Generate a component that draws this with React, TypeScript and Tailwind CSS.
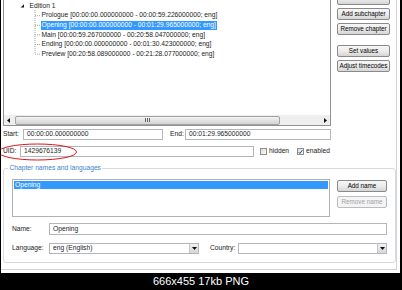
import React from 'react';

const chapters = [
  { name: 'Prologue [00:00:00.000000000 - 00:00:59.226000000; eng]', selected: false },
  { name: 'Opening [00:00:00.000000000 - 00:01:29.965000000; eng]', selected: true },
  { name: 'Main [00:00:59.267000000 - 00:20:58.047000000; eng]', selected: false },
  { name: 'Ending [00:00:00.000000000 - 00:01:30.423000000; eng]', selected: false },
  { name: 'Preview [00:20:58.089000000 - 00:21:28.077000000; eng]', selected: false },
];

const btn =
  'h-[12px] w-full flex items-center justify-center rounded-[2px] border border-[#8a8a8a] bg-linear-to-b from-[#f6f6f6] via-[#ececec] to-[#d5d5d5] text-black text-[6.3px] whitespace-nowrap';

const Button: React.FC<{ label: string; className?: string; disabled?: boolean }> = ({ label, className = '', disabled }) => (
  <div
    className={
      disabled
        ? `h-[12px] w-full flex items-center justify-center rounded-[2px] border border-[#b8bcbf] bg-[#f4f4f4] text-[#a3a3a3] text-[6.3px] whitespace-nowrap ${className}`
        : `${btn} ${className}`
    }
  >
    {label}
  </div>
);

const Input: React.FC<{ value?: string; className?: string }> = ({ value = '', className = '' }) => (
  <div className={`h-[11px] border border-[#b3b6bb] bg-white flex items-center pl-[3px] whitespace-nowrap overflow-hidden ${className}`}>
    {value}
  </div>
);

const Combo: React.FC<{ value?: string; className?: string }> = ({ value = '', className = '' }) => (
  <div className={`h-[11px] border border-[#b3b6bb] bg-white flex items-center ${className}`}>
    <span className="flex-1 pl-[3px] whitespace-nowrap">{value}</span>
    <div className="w-[9px] h-full border-l border-[#c4c4c4] bg-linear-to-b from-[#f2f2f2] to-[#d6d6d6] flex items-center justify-center">
      <svg width="5" height="3" viewBox="0 0 5 3">
        <polygon points="0,0 5,0 2.5,3" fill="#111" />
      </svg>
    </div>
  </div>
);

const Check: React.FC<{ checked?: boolean }> = ({ checked }) => (
  <div className="w-[7px] h-[7px] border border-[#8f8f8f] bg-linear-to-br from-[#dcdcdc] to-[#fafafa] flex items-center justify-center">
    {checked && (
      <svg width="6" height="6" viewBox="0 0 6 6">
        <path d="M0.8 3.2 L2.3 4.8 L5.3 0.8" stroke="#21489a" strokeWidth="1.2" fill="none" />
      </svg>
    )}
  </div>
);

export default function App() {
  return (
    <div className="w-[402px] h-[290px] bg-black flex flex-col font-['Liberation_Sans',Arial,sans-serif]">
      <div className="h-[273px] ml-px mr-[2px] bg-white relative text-[6.7px] leading-none text-[#1a1a1a]">
        <div className="w-[396px] h-[270px] border-r border-b border-[#d4d4d4] flex flex-col">
          {/* tree + chapter buttons */}
          <div className="flex h-[126px]">
            <div className="ml-[2px] w-[328px] h-[126px] border-l border-r border-b border-[#8e9297] flex flex-col">
              <div className="relative flex-1 flex flex-col pt-[1.3px]">
                <svg className="absolute left-0 top-0" width="326" height="60">
                  <polygon points="20,4.2 20,7.6 16.6,7.6" fill="#1a1a1a" />
                  <line x1="31" y1="10" x2="31" y2="54" stroke="#a5a5a5" strokeWidth="1" strokeDasharray="1 1" />
                  {[15.7, 25.3, 34.9, 44.5, 54.1].map((y) => (
                    <line key={y} x1="31" y1={y} x2="36" y2={y} stroke="#a5a5a5" strokeWidth="1" strokeDasharray="1 1" />
                  ))}
                </svg>
                <div className="h-[9.6px] flex items-center pl-[25.5px]">Edition 1</div>
                {chapters.map((c) => (
                  <div key={c.name} className="h-[9.6px] flex items-center pl-[36.5px]">
                    <span
                      className={`px-[1px] h-[8.6px] flex items-center whitespace-nowrap ${
                        c.selected ? 'bg-[#3399ff] text-white' : ''
                      }`}
                    >
                      {c.name}
                    </span>
                  </div>
                ))}
              </div>
              {/* horizontal scrollbar */}
              <div className="h-[10px] bg-[#eeeeee] flex items-center">
                <div className="w-[9px] h-full flex items-center justify-center">
                  <svg width="3" height="5" viewBox="0 0 3 5">
                    <polygon points="3,0 3,5 0,2.5" fill="#111" />
                  </svg>
                </div>
                <div className="ml-[2px] w-[265px] h-[9px] rounded-[2px] border border-[#a2a2a2] bg-linear-to-b from-[#f3f3f3] to-[#d3d3d3] flex items-center justify-center gap-[1px]">
                  <div className="w-px h-[4px] bg-[#666]" />
                  <div className="w-px h-[4px] bg-[#666]" />
                  <div className="w-px h-[4px] bg-[#666]" />
                </div>
                <div className="flex-1" />
                <div className="w-[9px] h-full flex items-center justify-center">
                  <svg width="3" height="5" viewBox="0 0 3 5">
                    <polygon points="0,0 0,5 3,2.5" fill="#111" />
                  </svg>
                </div>
              </div>
            </div>
            <div className="ml-[6px] w-[53px] flex flex-col">
              <Button label="" className="-mt-[7px]" />
              <Button label="Add subchapter" className="mt-[3px]" />
              <Button label="Remove chapter" className="mt-[3px]" />
              <Button label="Set values" className="mt-[10px]" />
              <Button label="Adjust timecodes" className="mt-[3px]" />
            </div>
          </div>

          {/* start / end */}
          <div className="mt-[3px] flex items-center h-[11px]">
            <span className="ml-[2px] w-[20px]">Start:</span>
            <Input value="00:00:00.000000000" className="w-[140px]" />
            <span className="ml-[7px] w-[15px]">End:</span>
            <Input value="00:01:29.965000000" className="w-[146px]" />
          </div>

          {/* uid */}
          <div className="mt-[6px] flex items-center h-[11px]">
            <span className="ml-[2px] w-[17px]">UID:</span>
            <Input value="1429676139" className="w-[234px]" />
            <div className="ml-[6px]">
              <Check />
            </div>
            <span className="ml-[2px]">hidden</span>
            <div className="ml-[8px]">
              <Check checked />
            </div>
            <span className="ml-[2px]">enabled</span>
          </div>

          {/* group box */}
          <div className="mt-[11px] ml-[2px] w-[393px] h-[95px] relative rounded-[3px] border border-[#d5dce1] pt-[10px] pl-[8px]">
            <span className="absolute left-[4px] -top-[4px] bg-white px-[1.5px] text-[#3f7fc8]">
              Chapter names and languages
            </span>
            <div className="flex">
              <div className="w-[318px] h-[38px] border border-[#aeb1b6] p-px">
                <div className="h-[8px] bg-[#3399ff] text-white flex items-center pl-[1px]">Opening</div>
              </div>
              <div className="ml-[7px] w-[50px] flex flex-col">
                <Button label="Add name" className="mt-[1px]" />
                <Button label="Remove name" className="mt-[4px]" disabled />
              </div>
            </div>
            <div className="mt-[6px] flex items-center">
              <span className="w-[37px]">Name:</span>
              <Input value="Opening" className="w-[338px] h-[12px]" />
            </div>
            <div className="mt-[8px] flex items-center">
              <span className="w-[37px]">Language:</span>
              <Combo value="eng (English)" className="w-[150px]" />
              <span className="ml-[11px] w-[28px] whitespace-nowrap">Country:</span>
              <Combo className="w-[149px]" />
            </div>
          </div>
        </div>

        {/* red highlight around UID */}
        <svg className="absolute left-0 top-0 pointer-events-none" width="399" height="273">
          <ellipse cx="36.5" cy="152" rx="39" ry="8" fill="none" stroke="#e0141e" strokeWidth="1" />
        </svg>
      </div>
      <div className="h-[17px] flex items-center justify-center text-white text-[11px] leading-none">
        666x455 17kb PNG
      </div>
    </div>
  );
}
